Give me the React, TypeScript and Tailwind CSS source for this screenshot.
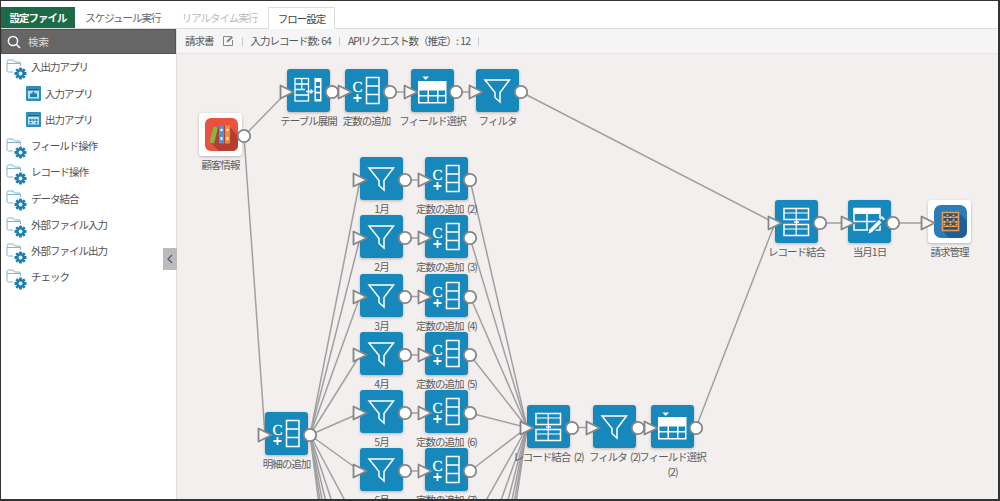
import React from "react";

const OX = 177;
const OY = 54;
const LINE = "#a0a0a0";
const PORT = "#868686";

const FolderGear = () => (
  <svg width="22" height="22" viewBox="0 0 22 22" fill="none" className="translate-y-[3px]">
    <path d="M1 4.5V2.5Q1 1 2.5 1H7L8.5 3H13Q14.5 3 14.5 4.5V7" stroke="#7fb6d4" strokeWidth="1" />
    <path d="M1 4.5H14.5M1 4.5V11.5Q1 13 2.5 13H7" stroke="#7fb6d4" strokeWidth="1" />
    <g transform="translate(14.5 14.5)">
      {[0, 45, 90, 135].map((a) => (
        <rect key={a} x="-1.4" y="-6" width="2.8" height="12" rx="0.4" fill="#1b7fb4" transform={`rotate(${a})`} />
      ))}
      <circle r="4.2" fill="#1b7fb4" />
      <circle r="1.9" fill="#fff" />
    </g>
  </svg>
);

const SubIcon = ({ out }: { out?: boolean }) => (
  <svg width="15" height="15" viewBox="0 0 15 15">
    <rect width="15" height="15" rx="1" fill="#2a8fc0" />
    <rect x="2" y="2.5" width="11" height="10" fill="#bfe0ee" />
    <rect x="2" y="2.5" width="11" height="2" fill="#15648f" />
    {out ? (
      <path d="M3.5 7h2v2h-2zM6.5 7h2v2h-2zM9.5 7h2v2h-2zM3.5 10h2v1.5h-2zM9.5 10h2v1.5h-2z" fill="#1c7eae" />
    ) : (
      <path d="M4 7.5h7v3.5h-7z M6.5 5.5h2v2h-2z" fill="#1c7eae" />
    )}
  </svg>
);

const ic = { stroke: "#fff", strokeWidth: 1.5, fill: "none" };

const FilterIcon = () => <path d="M9 11H33.5L24 23.5V33L19 28.5V23.5Z" {...ic} />;

const ConstIcon = () => (
  <>
    <text x="7.5" y="22.5" fontFamily="'Liberation Serif', serif" fontSize="15" fill="#fff" stroke="#fff" strokeWidth="0.3">C</text>
    <path d="M12.5 25V33M8.5 29H16.5" stroke="#fff" strokeWidth="1.8" />
    <rect x="21.5" y="8.5" width="12.5" height="26" {...ic} />
    <path d="M21.5 17H34M21.5 25.5H34" {...ic} />
  </>
);

const FieldIcon = () => (
  <>
    <path d="M11.5 7.5H18L14.7 11Z" fill="#fff" />
    <rect x="7" y="12" width="28.5" height="22.5" fill="#fff" />
    <path d="M8.5 21.5h8v4.5h-8zM18 21.5h8v4.5h-8zM27.5 21.5h6.5v4.5h-6.5zM8.5 27.5h8v5.5h-8zM18 27.5h8v5.5h-8zM27.5 27.5h6.5v5.5h-6.5z" fill="#1688bb" />
  </>
);

const ExpandIcon = () => (
  <>
    <rect x="8" y="9.5" width="13.5" height="22.5" {...ic} strokeWidth={1.3} />
    <path d="M8 15H21.5M8 20.5H18M8 26H21.5M14.7 9.5V20.5" {...ic} strokeWidth={1.3} />
    <path d="M19 22.5H24" stroke="#fff" strokeWidth="1.6" />
    <path d="M23.5 19.8L27 22.5L23.5 25.2Z" fill="#fff" />
    <rect x="27.5" y="9" width="7" height="23.5" fill="#fff" />
    <path d="M29 13h4v4h-4zM29 18.8h4v4h-4zM29 24.6h4v5.5h-4z" fill="#1688bb" />
  </>
);

const JoinIcon = () => (
  <>
    <rect x="9" y="8.5" width="24.5" height="11" {...ic} />
    <path d="M9 13H33.5M21.2 8.5V19.5" {...ic} strokeWidth={1.2} />
    <rect x="9" y="24.5" width="24.5" height="11" {...ic} />
    <path d="M9 29H33.5M21.2 24.5V35.5" {...ic} strokeWidth={1.2} />
    <path d="M21.5 19.5V24.5M19 22H24" stroke="#fff" strokeWidth="1.3" />
  </>
);

const DateIcon = () => (
  <>
    <rect x="6" y="8.5" width="26" height="21.5" {...ic} />
    <rect x="6" y="8.5" width="26" height="5.5" fill="#fff" />
    <path d="M6 21.5H32M19 14V30" {...ic} />
    <path d="M21 29L31 19L34.5 22.5L24.5 32.5L19.5 34.5Z" fill="#fff" stroke="#1688bb" strokeWidth="1.2" />
    <path d="M32.5 17.5L34 16L37 19L35.5 20.5Z" fill="#fff" />
  </>
);

const BinderApp = () => (
  <svg width="33" height="33" viewBox="0 0 33 33" className="absolute left-[6px] top-[5px]">
    <rect width="33" height="33" rx="6" fill="#e8523f" />
    <path d="M6 25L14 8H24L33 18V27Q33 33 27 33H14Z" fill="#b23f31" />
    <path d="M8.5 8.5L13 9.5L9 25.5L4.5 24.5Z" fill="#83b840" />
    <rect x="14" y="7.5" width="5" height="18" fill="#4a94e0" />
    <rect x="20" y="7.5" width="5" height="18" fill="#f08a34" />
    <circle cx="16.5" cy="12" r="1.2" fill="#fff" />
    <circle cx="22.5" cy="12" r="1.2" fill="#fff" />
    <rect x="15.5" y="19" width="2" height="3" fill="#fff" />
    <rect x="21.5" y="19" width="2" height="3" fill="#fff" />
  </svg>
);

const AbacusApp = () => (
  <svg width="33" height="33" viewBox="0 0 33 33" className="absolute left-[6px] top-[5px]">
    <rect width="33" height="33" rx="7" fill="#2c7cb8" />
    <path d="M9 26L24 7L33 16V26Q33 33 26 33H15Z" fill="#1f5f95" />
    <rect x="8.5" y="7.5" width="16" height="18" fill="#39505f" stroke="#e59a52" strokeWidth="1.6" />
    <path d="M9 12.5H24M9 17H24M9 21.5H24" stroke="#e59a52" strokeWidth="1" />
    {[11, 14, 17, 20, 23].map((x, i) => (
      <g key={x}>
        <circle cx={x - 0.5} cy={i % 2 ? 10.5 : 12} r="1.1" fill="#e8b27c" />
        <circle cx={x - 0.5} cy={i % 2 ? 15 : 16.8} r="1.1" fill="#e8b27c" />
        <circle cx={x - 0.5} cy={i % 2 ? 21 : 19.5} r="1.1" fill="#e8b27c" />
      </g>
    ))}
  </svg>
);

type NodeDef = {
  x: number;
  y: number;
  kind: "filter" | "const" | "field" | "expand" | "join" | "date" | "binder" | "abacus";
  label: string[];
  input?: boolean;
  noOutput?: boolean;
};

const rowY = [157, 215, 273.5, 332, 390, 448];
const months = ["1月", "2月", "3月", "4月", "5月", "6月"];

const nodes: NodeDef[] = [
  { x: 199, y: 113, kind: "binder", label: ["顧客情報"] },
  { x: 287, y: 69, kind: "expand", label: ["テーブル展開"], input: true },
  { x: 345, y: 69, kind: "const", label: ["定数の追加"], input: true },
  { x: 411, y: 69, kind: "field", label: ["フィールド選択"], input: true },
  { x: 476, y: 69, kind: "filter", label: ["フィルタ"], input: true },
  { x: 265, y: 412, kind: "const", label: ["明細の追加"], input: true },
  ...rowY.flatMap<NodeDef>((y, i) => [
    { x: 360, y, kind: "filter", label: [months[i]], input: true },
    { x: 425, y, kind: "const", label: [`定数の追加 (${i + 2})`], input: true },
  ]),
  { x: 527, y: 404.5, kind: "join", label: ["レコード結合 (2)"], input: true },
  { x: 593, y: 404.5, kind: "filter", label: ["フィルタ (2)"], input: true },
  { x: 651, y: 404.5, kind: "field", label: ["フィールド選択", "(2)"], input: true },
  { x: 775, y: 200, kind: "join", label: ["レコード結合"], input: true },
  { x: 848, y: 200, kind: "date", label: ["当月1日"], input: true },
  { x: 928, y: 200, kind: "abacus", label: ["請求管理"], input: true, noOutput: true },
];

type Pt = [number, number];
const out = (x: number, y: number): Pt => [x + 45, y + 23];
const inp = (x: number, y: number): Pt => [x, y + 23];

const allRows = [...rowY, 506, 564, 622, 680, 738, 796];

const edges: [Pt, Pt][] = [
  [out(199, 113), inp(287, 69)],
  [out(199, 113), inp(265, 412)],
  [out(287, 69), inp(345, 69)],
  [out(345, 69), inp(411, 69)],
  [out(411, 69), inp(476, 69)],
  [out(476, 69), inp(775, 200)],
  [out(527, 404.5), inp(593, 404.5)],
  [out(593, 404.5), inp(651, 404.5)],
  [out(651, 404.5), inp(775, 200)],
  [out(775, 200), inp(848, 200)],
  [out(848, 200), inp(928, 200)],
  ...allRows.flatMap((y): [Pt, Pt][] => [
    [out(265, 412), inp(360, y)],
    [out(360, y), inp(425, y)],
    [out(425, y), inp(527, 404.5)],
  ]),
];

const Glyph = ({ kind }: { kind: NodeDef["kind"] }) => {
  switch (kind) {
    case "filter":
      return <FilterIcon />;
    case "const":
      return <ConstIcon />;
    case "field":
      return <FieldIcon />;
    case "expand":
      return <ExpandIcon />;
    case "join":
      return <JoinIcon />;
    case "date":
      return <DateIcon />;
    default:
      return null;
  }
};

const FlowNode = ({ n }: { n: NodeDef }) => {
  const app = n.kind === "binder" || n.kind === "abacus";
  return (
    <div className="absolute w-[43px] h-[43px]" style={{ left: n.x - OX, top: n.y - OY }}>
      <div
        className={`absolute inset-0 rounded-[3px] shadow-[0_1px_3px_rgba(0,0,0,0.25)] ${app ? "bg-white" : "bg-[#1688bb]"}`}
      >
        {n.kind === "binder" && <BinderApp />}
        {n.kind === "abacus" && <AbacusApp />}
        {!app && (
          <svg width="43" height="43" viewBox="0 0 43 43">
            <Glyph kind={n.kind} />
          </svg>
        )}
      </div>
      <div className="absolute left-1/2 top-[44px] w-[100px] -translate-x-1/2 text-center text-[10.5px] leading-[15px] tracking-[-1px] [word-spacing:2px] text-[#5c5c5c] whitespace-nowrap">
        {n.label.map((l) => (
          <div key={l}>{l}</div>
        ))}
      </div>
      <svg width="70" height="43" viewBox="0 0 70 43" className="absolute left-[-10px] top-0 overflow-visible">
        {n.input && <path d="M3.5 16.5L16.5 23L3.5 29.5Z" fill="#f6f3f3" stroke={PORT} strokeWidth="1.8" strokeLinejoin="round" />}
        {!n.noOutput && <circle cx="55" cy="23" r="6.2" fill="#fff" stroke={PORT} strokeWidth="1.8" />}
      </svg>
    </div>
  );
};

const side: { label: string; sub?: "in" | "out" }[] = [
  { label: "入出力アプリ" },
  { label: "入力アプリ", sub: "in" },
  { label: "出力アプリ", sub: "out" },
  { label: "フィールド操作" },
  { label: "レコード操作" },
  { label: "データ結合" },
  { label: "外部ファイル入力" },
  { label: "外部ファイル出力" },
  { label: "チェック" },
];

const Sep = () => <span className="w-px h-[9px] bg-[#ccc]" />;

export default function App() {
  return (
    <div className="relative w-[1000px] h-[501px] overflow-hidden flex flex-col bg-white border-t border-l border-r-2 border-b-2 border-[#333] font-['Noto_Sans_CJK_JP',sans-serif]">
      <div className="flex items-end h-[28px] shrink-0 border-b border-[#ddd] text-[10.5px] tracking-[-1px]">
        <div className="w-[74px] h-[21px] flex items-center justify-center bg-[#1c6b46] text-white font-bold">設定ファイル</div>
        <div className="w-[96px] h-[21px] flex items-center justify-center text-[#666]">スケジュール実行</div>
        <div className="w-[97px] h-[21px] flex items-center justify-center text-[#bbb]">リアルタイム実行</div>
        <div className="w-[67px] h-[22px] -mb-px flex items-center justify-center bg-white border border-b-0 border-[#ddd] text-[#444]">フロー設定</div>
      </div>
      <div className="flex flex-1 min-h-0">
        <aside className="w-[176px] shrink-0 flex flex-col border-r border-[#ddd] bg-white">
          <div className="h-[25px] shrink-0 flex items-center gap-[7px] pl-[5px] bg-[#666] border border-[#555] text-[#ddd] text-[10.5px]">
            <svg width="14" height="14" viewBox="0 0 14 14" fill="none" stroke="#fff" strokeWidth="1.5">
              <circle cx="6" cy="6" r="4.6" />
              <path d="M9.5 9.5L13 13" />
            </svg>
            <span>検索</span>
          </div>
          {side.map((s) => (
            <div
              key={s.label}
              className={`h-[26.25px] shrink-0 flex items-center text-[10.5px] tracking-[-1px] text-[#505050] ${s.sub ? "pl-[25px] gap-[4px]" : "pl-[5px] gap-[3px]"}`}
            >
              {s.sub ? <SubIcon out={s.sub === "out"} /> : <FolderGear />}
              <span>{s.label}</span>
            </div>
          ))}
        </aside>
        <main className="flex-1 min-w-0 flex flex-col">
          <div className="h-[25px] shrink-0 flex items-center gap-[8px] pl-[8px] bg-[#f5f5f5] border-b border-[#e4e4e4] text-[10.5px] tracking-[-1px] [word-spacing:1px] text-[#555]">
            <span>請求書</span>
            <svg width="12" height="12" viewBox="0 0 12 12" fill="none">
              <path d="M9 1.5H1.5V10.5H10.5V5" stroke="#888" strokeWidth="1" />
              <path d="M4.5 7.5L5 5.5L9.5 1L11 2.5L6.5 7Z" fill="#888" />
            </svg>
            <Sep />
            <span>入力レコード数: 64</span>
            <Sep />
            <span>APIリクエスト数（推定）: 12</span>
            <Sep />
          </div>
          <div className="relative flex-1 min-h-0 overflow-hidden bg-[#f3efef]">
            <svg width="823" height="446" className="absolute left-0 top-0">
              {edges.map(([a, b], i) => (
                <line key={i} x1={a[0] - OX} y1={a[1] - OY} x2={b[0] - OX} y2={b[1] - OY} stroke={LINE} strokeWidth="1.5" />
              ))}
            </svg>
            {nodes.map((n, i) => (
              <FlowNode key={i} n={n} />
            ))}
          </div>
        </main>
      </div>
      <div className="absolute left-[162px] top-[247px] w-[14px] h-[22px] flex items-center justify-center bg-[#bbb]">
        <svg width="6" height="10" viewBox="0 0 6 10" fill="none" stroke="#4a5a78" strokeWidth="1.2">
          <path d="M5 1L1 5L5 9" />
        </svg>
      </div>
    </div>
  );
}
